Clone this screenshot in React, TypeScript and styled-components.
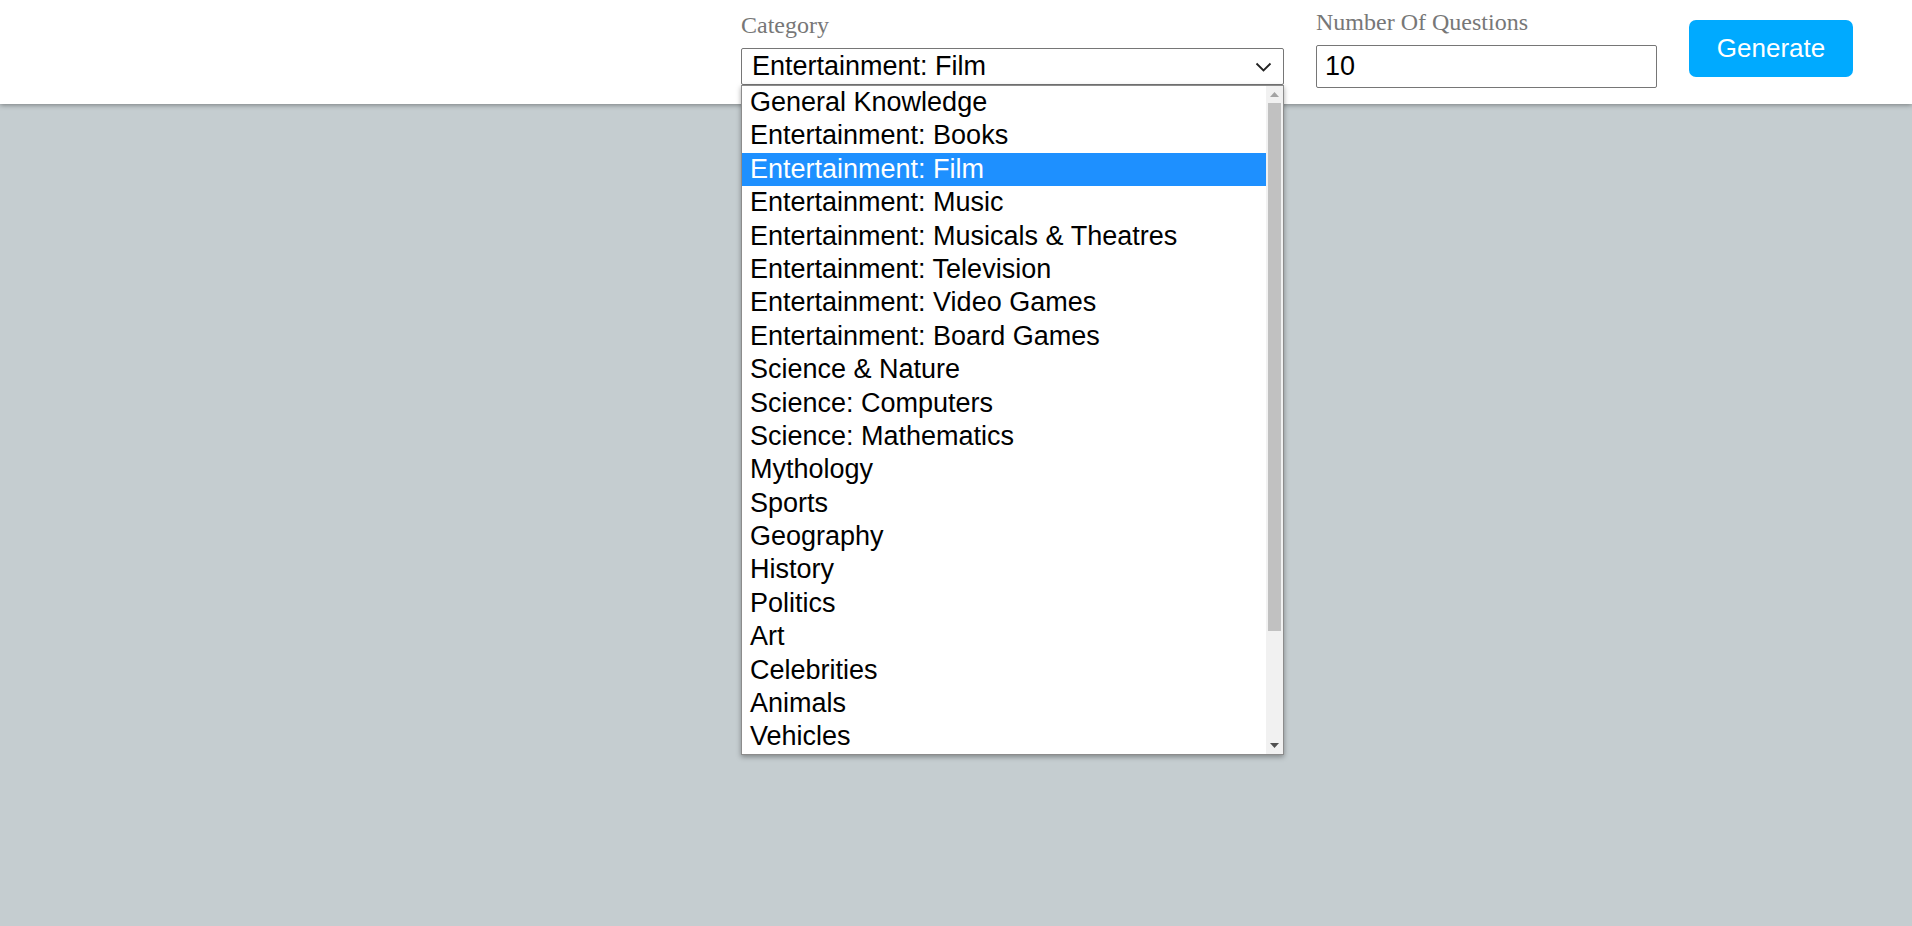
import React from "react"
import styled, { createGlobalStyle } from "styled-components"

const categories = [
  "General Knowledge",
  "Entertainment: Books",
  "Entertainment: Film",
  "Entertainment: Music",
  "Entertainment: Musicals & Theatres",
  "Entertainment: Television",
  "Entertainment: Video Games",
  "Entertainment: Board Games",
  "Science & Nature",
  "Science: Computers",
  "Science: Mathematics",
  "Mythology",
  "Sports",
  "Geography",
  "History",
  "Politics",
  "Art",
  "Celebrities",
  "Animals",
  "Vehicles",
  "Entertainment: Comics",
  "Science: Gadgets",
  "Entertainment: Japanese Anime & Manga",
  "Entertainment: Cartoon & Animations"
]

const selected = "Entertainment: Film"
const visibleRows = 20

const GlobalStyle = createGlobalStyle`
  html, body {
    margin: 0;
    padding: 0;
  }
  body {
    background: #c5cdd0;
    min-height: 100vh;
    font-family: "Liberation Sans", Arial, sans-serif;
  }
`

export default function App() {
  // only the rows the open list shows; the thumb size reflects the rest
  const shown = categories.slice(0, visibleRows)

  return (
    <>
      <GlobalStyle />
      <Header>
        <Field>
          <Label>Category</Label>
          <SelectWrap>
            <SelectBox>
              <span>{selected}</span>
              <svg width="17" height="10" viewBox="0 0 17 10">
                <path
                  d="M1.5 1.5 L8.5 8.5 L15.5 1.5"
                  fill="none"
                  stroke="#222"
                  strokeWidth="1.8"
                />
              </svg>
            </SelectBox>
            <Dropdown>
              <OptionList>
                {shown.map(category => (
                  <Option key={category} active={category === selected}>
                    {category}
                  </Option>
                ))}
              </OptionList>
              <Scrollbar>
                <ArrowButton>
                  <svg width="9" height="5" viewBox="0 0 9 5">
                    <path d="M0 5 L4.5 0 L9 5 Z" fill="#a3a3a3" />
                  </svg>
                </ArrowButton>
                <Track>
                  <Thumb
                    style={{ height: `${(visibleRows / categories.length) * 100}%` }}
                  />
                </Track>
                <ArrowButton>
                  <svg width="9" height="5" viewBox="0 0 9 5">
                    <path d="M0 0 L9 0 L4.5 5 Z" fill="#505050" />
                  </svg>
                </ArrowButton>
              </Scrollbar>
            </Dropdown>
          </SelectWrap>
        </Field>
        <Field shift={-3}>
          <Label>Number Of Questions</Label>
          <NumberInput type="number" defaultValue={10} />
        </Field>
        <GenerateButton>Generate</GenerateButton>
      </Header>
    </>
  )
}

const Header = styled.header`
  position: relative;
  z-index: 1;
  height: 104px;
  background: #fff;
  box-shadow: 0 1px 5px rgba(0, 0, 0, 0.4);
  display: flex;
  justify-content: flex-end;
  align-items: flex-start;
  gap: 32px;
  padding-right: 59px;
  box-sizing: border-box;
`

const Field = styled.div<{ shift?: number }>`
  display: flex;
  flex-direction: column;
  padding-top: ${p => 12 + (p.shift || 0)}px;
`

const Label = styled.label`
  font-family: "Liberation Serif", "Times New Roman", serif;
  font-size: 24px;
  line-height: 27px;
  color: #777;
  margin-bottom: 9px;
`

const SelectWrap = styled.div`
  position: relative;
  width: 543px;
`

const SelectBox = styled.div`
  height: 37px;
  box-sizing: border-box;
  border: 1px solid #767676;
  border-radius: 2px;
  background: #fff;
  display: flex;
  align-items: center;
  justify-content: space-between;
  padding: 0 11px 0 10px;
  font-size: 27px;
  color: #000;
`

const Dropdown = styled.div`
  position: absolute;
  top: 100%;
  left: 0;
  right: 0;
  height: 670px;
  box-sizing: border-box;
  border: 1px solid #8c8c8c;
  background: #fff;
  box-shadow: 0 2px 5px rgba(0, 0, 0, 0.35);
  display: flex;
`

const OptionList = styled.div`
  flex: 1;
  overflow: hidden;
`

const Option = styled.div<{ active: boolean }>`
  height: 33.4px;
  line-height: 33.4px;
  padding-left: 8px;
  font-size: 27px;
  white-space: nowrap;
  color: ${p => (p.active ? "#fff" : "#000")};
  background: ${p => (p.active ? "#1e90ff" : "transparent")};
`

const Scrollbar = styled.div`
  width: 17px;
  background: #f1f1f1;
  display: flex;
  flex-direction: column;
`

const ArrowButton = styled.div`
  height: 17px;
  display: flex;
  align-items: center;
  justify-content: center;
`

const Track = styled.div`
  flex: 1;
  padding: 0 2px;
`

const Thumb = styled.div`
  background: #c1c1c1;
`

const NumberInput = styled.input`
  width: 341px;
  height: 43px;
  box-sizing: border-box;
  border: 1px solid #767676;
  border-radius: 2px;
  padding: 0 8px;
  font-family: "Liberation Sans", Arial, sans-serif;
  font-size: 27px;
  color: #000;
  outline: none;
  -moz-appearance: textfield;
  &::-webkit-outer-spin-button,
  &::-webkit-inner-spin-button {
    -webkit-appearance: none;
    margin: 0;
  }
`

const GenerateButton = styled.button`
  margin-top: 20px;
  width: 164px;
  height: 57px;
  border: none;
  border-radius: 7px;
  background: #00aaff;
  color: #fff;
  font-family: "Liberation Sans", Arial, sans-serif;
  font-size: 26px;
  cursor: pointer;
`
